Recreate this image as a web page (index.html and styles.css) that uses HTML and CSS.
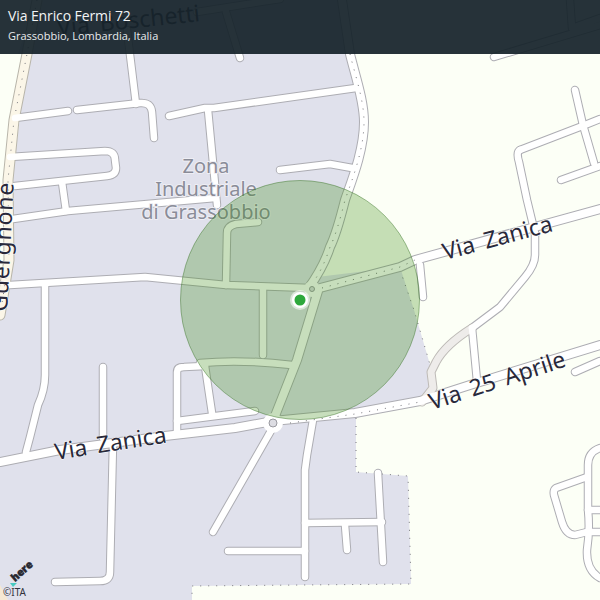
FILE: index.html
```html
<!DOCTYPE html>
<html lang="it">
<head>
<meta charset="utf-8">
<title>Via Enrico Fermi 72</title>
<link rel="stylesheet" href="styles.css">
</head>
<body>
<main class="map">
<svg class="map-canvas" width="600" height="600" viewBox="0 0 600 600">
  <defs>
    <g id="minor">
      <path d="M127 30L136 104"/>
      <path d="M15 118L68 111"/>
      <path d="M77 110L140 103Q151 102 152 112L154 138"/>
      <path d="M169 116L205 108Q210 108 214 108L356 88"/>
      <path d="M208 110L217 205"/>
      <path d="M197 12L280 -1"/>
      <path d="M226 12L240 58"/>
      <path d="M10 157L105 151Q115 151 115 160L116 168Q116 175 107 176L15 186"/>
      <path d="M62 182L66 211"/>
      <path d="M13 219L68 211L215 198"/>
      <path d="M280 170L330 164L352 168"/>
      <path d="M10 285L145 277L226 285L310 288"/>
      <path d="M45 285L45 375Q45 390 38 405L30 437L26 452"/>
      <path d="M226 285L227 233Q227 226 236 224L258 222"/>
      <path d="M263 287L263 355"/>
      <path d="M420 265L423 297"/>
      <path d="M177 432L177 372Q177 367 184 367L205 366"/>
      <path d="M205 366L212 413"/>
      <path d="M177 421L255 411"/>
      <path d="M200 363Q240 359 292 365"/>
      <path d="M103 367L103 438"/>
      <path d="M113 443L110 572Q110 581 100 581L55 582"/>
      <path d="M273 423Q273 428 268 436L213 532"/>
      <path d="M228 551L305 551"/>
      <path d="M313 420L307 455L305 470L305 577"/>
      <path d="M305 523L382 522"/>
      <path d="M378 473L383 562"/>
      <path d="M345 525L347 550"/>
      <path d="M520 150Q516 152 519 162L527 200L535 233L535 255Q535 265 525 277L500 307L472 328"/>
      <path d="M520 150L585 125L600 119"/>
      <path d="M575 90L583 125L594 163"/>
      <path d="M561 180L600 166"/>
      <path d="M472 328L477 381"/>
      <path d="M494 57L600 25"/>
      <path d="M570 0L572 28L600 18"/>
      <path d="M575 372L600 361"/>
      <path d="M600 448Q588 452 588 465L588 510Q590 530 587 550Q586 570 600 578"/>
      <path d="M587 477L556 488Q553 490 554 495L562 522Q566 535 575 535L587 532"/>
      <path d="M588 510L600 510"/>
      <path d="M588 532L600 532"/>
    </g>
    <g id="major">
      <path d="M0 462L60 450L165 436L235 428L273 421L355 413L420 401L470 385L600 345"/>
      <path d="M320 288L400 267L415 260L600 209"/>
      <path d="M342 0L350 54C355 75 364 100 364 122C364 150 352 180 345 200C340 220 335 237 330 247C326 260 320 272 308 289"/>
      <path d="M318 291L297 360L273 421"/>
    </g>
  </defs>

  <rect class="land" width="600" height="600"/>
  <path class="area" d="M28 54L18 54L37 -5L342 0L350 54L362 100L364 122L358 160L345 200L330 247L317 277L400 267L414 310L431 368L432 385L420 401L356 418L356 472L408 476L411 584L192 586L192 600L0 600L0 315L10 260L12 180Z"/>
  <path class="area" d="M37 0L345 0L350 60L30 60Z"/>
  <path class="area-edge" d="M356 418L356 472L408 476L411 584L192 586L192 600"/>
  <path class="area-edge" d="M400 270L414 310L431 368"/>
  <path class="corner" d="M0 585L8 600L0 600Z"/>

  <use href="#minor" class="casing"/>
  <use href="#major" class="casing casing-major"/>
  <path class="cream-edge" d="M37 0L27 54L14 120L8 180L9 260L0 315"/>
  <path class="cream" d="M37 0L27 54L14 120L8 180L9 260L0 315"/>
  <path class="cream-dots" d="M37 0L27 54L14 120L8 180L9 260L0 315"/>
  <path class="gray-edge" d="M472 328Q445 345 436 362L431 372L433 388L422 402"/>
  <path class="gray-road" d="M472 328Q445 345 436 362L431 372L433 388L422 402"/>
  <use href="#minor" class="fill"/>
  <use href="#major" class="fill fill-major"/>
  <circle class="junction" cx="312" cy="289" r="8"/>
  <circle class="junction" cx="273" cy="423" r="10"/>
  <path class="dots" d="M290 423L355 414L420 402"/>
  <path class="dots" d="M322 288L400 267L415 260"/>
  <path class="dots" d="M350 54C355 75 364 100 364 122C364 150 352 180 345 200C340 220 335 237 330 247C326 260 320 272 316 278"/>
  <circle class="rb" cx="312" cy="289" r="2.5"/>
  <circle class="rb" cx="273" cy="423" r="4"/>

  <text class="label street street-plain" transform="translate(58 36) rotate(-6)">Via Boschetti</text>
  <text class="label street street-spaced" transform="translate(7 312) rotate(-87)">Guerghone</text>
  <text class="label street" transform="translate(445 260) rotate(-15)">Via Zanica</text>
  <text class="label street" transform="translate(56 460) rotate(-9)">Via Zanica</text>
  <text class="label street" transform="translate(432 410) rotate(-18)">Via 25 Aprile</text>
  <text class="label place" x="206" y="173">Zona</text>
  <text class="label place" x="206" y="196">Industriale</text>
  <text class="label place" x="206" y="219">di Grassobbio</text>

  <circle class="radius" cx="300" cy="300" r="119.5"/>
  <circle class="pin-halo" cx="300" cy="300" r="10"/>
  <circle class="pin-ring" cx="300" cy="300" r="8"/>
  <circle class="pin-dot" cx="300" cy="300" r="5.5"/>

  <path class="here-mark" d="M10 583L17 583L13 587Z"/>
  <text class="here" transform="translate(15 582) rotate(-42)">here</text>
  <text class="copyright" x="3" y="596">©ITA</text>
</svg>
<header class="address">
  <h1 class="address-title">Via Enrico Fermi 72</h1>
  <p class="address-sub">Grassobbio, Lombardia, Italia</p>
</header>
</main>
</body>
</html>
```
FILE: styles.css
```css
html, body {
  margin: 0;
  padding: 0;
  background: #fcfff6;
}
.map {
  position: relative;
  width: 600px;
  height: 600px;
  overflow: hidden;
  font-family: "Open Sans", "Noto Sans", sans-serif;
}
.map-canvas { display: block; }
.land { fill: #fcfff6; }
.area { fill: #e0e1ec; }
.area-edge, .dots, .cream-dots {
  fill: none;
  stroke: #77777c;
  stroke-width: 1;
  stroke-dasharray: 1 7;
}
.corner { fill: #f5e8d3; }
.casing, .fill, .cream, .cream-edge, .gray-road, .gray-edge {
  fill: none;
  stroke-linecap: round;
  stroke-linejoin: round;
}
.casing { stroke: #adadb3; stroke-width: 8.5; }
.casing-major { stroke-width: 10; }
.fill { stroke: #ffffff; stroke-width: 6.5; }
.fill-major { stroke-width: 8; }
.cream-edge { stroke: #b8b5aa; stroke-width: 11; }
.cream { stroke: #fbf6e8; stroke-width: 9; }
.gray-edge { stroke: #bdbab6; stroke-width: 9; }
.gray-road { stroke: #eeecea; stroke-width: 7; }
.junction { fill: #ffffff; }
.rb { fill: #dcdce2; stroke: #9a9aa0; stroke-width: 1; }
.label {
  font-family: "Noto Sans", sans-serif;
  paint-order: stroke;
  stroke-linejoin: round;
}
.street {
  font-size: 23px;
  fill: #29293a;
  stroke: #ffffff;
  stroke-width: 1;
  word-spacing: 4px;
}
.street-plain { stroke: none; }
.street-spaced { letter-spacing: 0.8px; }
.place {
  font-size: 20px;
  fill: #8a8c98;
  stroke: #eeeef4;
  stroke-width: 2;
  text-anchor: middle;
}
.radius {
  fill: rgba(53, 138, 13, 0.28);
  stroke: rgba(50, 110, 30, 0.45);
  stroke-width: 1;
}
.pin-halo { fill: rgba(255, 255, 255, 0.55); }
.pin-ring { fill: #ffffff; }
.pin-dot { fill: #2ea83c; }
.here-mark { fill: #48c9c0; }
.here {
  font-family: "Open Sans", sans-serif;
  font-size: 10.5px;
  font-weight: 800;
  fill: #26262e;
  stroke: #26262e;
  stroke-width: 0.5;
}
.copyright {
  font-family: "Noto Sans", sans-serif;
  font-size: 10px;
  fill: #33333c;
}
.address {
  position: absolute;
  top: 0;
  left: 0;
  right: 0;
  height: 54px;
  box-sizing: border-box;
  padding: 6px 8px 0;
  background: rgba(22, 34, 42, 0.93);
  color: #f2f4f5;
}
.address-title {
  margin: 0;
  font-size: 14px;
  font-weight: 400;
  line-height: 20px;
  letter-spacing: -0.1px;
}
.address-sub {
  margin: 2px 0 0;
  font-size: 11px;
  line-height: 16px;
  color: #e8ebed;
}
```
